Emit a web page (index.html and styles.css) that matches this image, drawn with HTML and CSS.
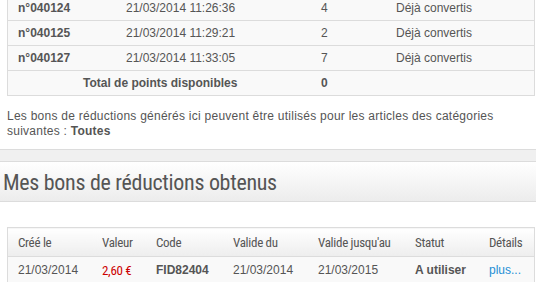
FILE: index.html
```html
<!DOCTYPE html>
<html lang="fr">
<head>
    <meta charset="UTF-8">
    <title>Mes points fidélité</title>
    <link rel="stylesheet" href="styles.css">
</head>
<body>
<div class="points">
    <table class="tbl tbl-points">
        <tr>
            <td class="ref">n°040124</td>
            <td class="date">21/03/2014 11:26:36</td>
            <td class="pts">4</td>
            <td class="state">Déjà convertis</td>
        </tr>
        <tr>
            <td class="ref">n°040125</td>
            <td class="date">21/03/2014 11:29:21</td>
            <td class="pts">2</td>
            <td class="state">Déjà convertis</td>
        </tr>
        <tr>
            <td class="ref">n°040127</td>
            <td class="date">21/03/2014 11:33:05</td>
            <td class="pts">7</td>
            <td class="state">Déjà convertis</td>
        </tr>
        <tr class="total">
            <td colspan="2" class="total-label">Total de points disponibles</td>
            <td class="pts">0</td>
            <td></td>
        </tr>
    </table>

    <p class="note">Les bons de réductions générés ici peuvent être utilisés pour les articles des catégories suivantes : <strong>Toutes</strong></p>
</div>

<!-- Vouchers section -->
<div class="band"></div>
<h2 class="section-title">Mes bons de réductions obtenus</h2>

<div class="vouchers">
    <table class="tbl tbl-vouchers">
        <thead>
        <tr>
            <th class="c-created">Créé le</th>
            <th class="c-value">Valeur</th>
            <th class="c-code">Code</th>
            <th class="c-from">Valide du</th>
            <th class="c-to">Valide jusqu'au</th>
            <th class="c-status">Statut</th>
            <th class="c-details">Détails</th>
        </tr>
        </thead>
        <tbody>
        <tr>
            <td>21/03/2014</td>
            <td class="price">2,60 €</td>
            <td class="code">FID82404</td>
            <td>21/03/2014</td>
            <td>21/03/2015</td>
            <td class="status">A utiliser</td>
            <td><a href="#" class="more">plus...</a></td>
        </tr>
        </tbody>
    </table>
</div>
</body>
</html>
```

FILE: styles.css
```css
/* General Reset */
body {
    margin: 0;
    padding: 0;
    font-family: "Liberation Sans", Arial, sans-serif;
    font-size: 12px;
    color: #555;
    background: #fff;
    overflow: hidden;
}

/* Tables */
.tbl {
    border-collapse: collapse;
    width: 528px;
    margin-left: 7px;
    border-left: 1px solid #dcdcdc;
    border-right: 1px solid #dcdcdc;
}

.tbl td {
    padding: 0 0 0 10px;
    height: 24px;
    background: #f9f9f9;
    border-bottom: 1px solid #dcdcdc;
    text-align: left;
    white-space: nowrap;
}

/* Points table */
.tbl-points {
    margin-top: -4px;
}

.tbl-points .ref {
    width: 98px;
    font-weight: bold;
}

.tbl-points .date {
    width: 185px;
}

.tbl-points .pts {
    width: 65px;
}

.tbl-points .total td {
    font-weight: bold;
}

.tbl-points .total-label {
    padding-left: 75px;
}

.note {
    margin: 13px 0 0 7px;
    line-height: 15px;
    letter-spacing: 0.25px;
}

/* Section header */
.band {
    margin-top: 10px;
    height: 11px;
    background: #f0f0f0;
    border-top: 1px solid #dcdcdc;
    border-bottom: 1px solid #dcdcdc;
}

.section-title {
    margin: 0;
    height: 39px;
    padding-left: 3px;
    font-family: "Roboto Condensed", Roboto, sans-serif;
    font-weight: normal;
    font-size: 22px;
    line-height: 42px;
    letter-spacing: -0.3px;
    color: #555;
    background: linear-gradient(#ffffff, #ececec);
    border-bottom: 1px solid #dcdcdc;
}

/* Vouchers table */
.vouchers {
    padding-top: 25px;
}

.tbl-vouchers {
    border-top: 1px solid #dcdcdc;
}

.tbl-vouchers th {
    height: 28px;
    padding: 0 0 0 10px;
    text-align: left;
    font-family: "Roboto Condensed", Roboto, sans-serif;
    font-weight: normal;
    font-size: 13px;
    letter-spacing: -0.3px;
    color: #555;
    background: linear-gradient(#ffffff, #ededed);
    border-bottom: 1px solid #dcdcdc;
    white-space: nowrap;
}

.tbl-vouchers td {
    height: 26px;
}

.c-created { width: 74px; }
.c-value { width: 44px; }
.c-code { width: 67px; }
.c-from { width: 75px; }
.c-to { width: 87px; }
.c-status { width: 64px; }

.price {
    font-family: "Roboto Condensed", Roboto, sans-serif;
    font-size: 13px;
    letter-spacing: -0.3px;
    color: #cc0000;
}

.code,
.status {
    font-weight: bold;
}

.more {
    color: #1e8fd6;
    text-decoration: none;
}
```
